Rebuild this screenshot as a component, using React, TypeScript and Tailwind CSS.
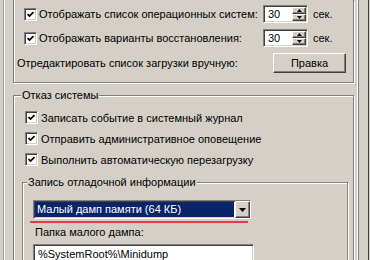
import React from 'react';

const sunken =
  'border border-t-[#808080] border-l-[#808080] border-b-white border-r-white shadow-[inset_1px_1px_0_#404040,inset_-1px_-1px_0_#d4d0c8]';
const raised =
  'border border-t-white border-l-white border-r-[#404040] border-b-[#404040] shadow-[inset_-1px_-1px_0_#808080]';
const etched = 'border border-[#808080] shadow-[inset_1px_1px_0_#fff,1px_1px_0_#fff]';

const Check: React.FC = () => (
  <div className={`w-[13px] h-[13px] bg-white shrink-0 flex items-center justify-center ${sunken}`}>
    <svg width="7" height="7" viewBox="0 0 7 7">
      <path d="M0.5 3 L2.5 5 L6.5 1" fill="none" stroke="#000" strokeWidth="1.7" />
    </svg>
  </div>
);

const CheckRow: React.FC<{ label: string }> = ({ label }) => (
  <div className="h-[21px] flex items-center pl-[11px]">
    <Check />
    <span className="ml-[2px] px-[1px] whitespace-nowrap">{label}</span>
  </div>
);

const Spin: React.FC = () => (
  <div className={`w-[45px] h-[18px] bg-white flex shrink-0 ${sunken}`}>
    <div className="flex-1 pl-[4px] leading-[16px]">30</div>
    <div className="w-[14px] my-[1px] mr-[1px] flex flex-col">
      <div className={`flex-1 flex items-center justify-center bg-[#d4d0c8] ${raised}`}>
        <svg width="5" height="3" viewBox="0 0 5 3"><path d="M2.5 0 L5 3 L0 3 Z" fill="#000" /></svg>
      </div>
      <div className={`flex-1 flex items-center justify-center bg-[#d4d0c8] ${raised}`}>
        <svg width="5" height="3" viewBox="0 0 5 3"><path d="M0 0 L5 0 L2.5 3 Z" fill="#000" /></svg>
      </div>
    </div>
  </div>
);

const SpinRow: React.FC<{ label: string }> = ({ label }) => (
  <div className="h-[24px] flex items-center pl-[10px]">
    <Check />
    <span className="ml-[2px] w-[224px] whitespace-nowrap">{label}</span>
    <Spin />
    <span className="ml-[5px]">сек.</span>
  </div>
);

export default function App() {
  return (
    <div
      className="w-[370px] h-[260px] bg-[#d4d0c8] flex overflow-hidden text-[11px] leading-[14px] text-black"
      style={{ fontFamily: '"Liberation Sans", Arial, sans-serif' }}
    >
      <div className="w-[3px] shrink-0" />

      {/* dialog panel */}
      <div className="w-[356px] shrink-0 border-l border-l-[#a0a0a0] border-r border-r-[#808080] shadow-[inset_1px_0_0_#fff,inset_-1px_0_0_#fff] pl-[9px]">
        {/* boot options group (top cut off) */}
        <div className="w-[341px] h-[83px] border-x border-b border-[#808080] shadow-[inset_1px_0_0_#fff,1px_1px_0_#fff] pt-[2px]">
          <SpinRow label="Отображать список операционных систем:" />
          <SpinRow label="Отображать варианты восстановления:" />
          <div className="h-[26px] flex items-center pl-[3px]">
            <span className="w-[256px] whitespace-nowrap">Отредактировать список загрузки вручную:</span>
            <button className={`w-[73px] h-[20px] bg-[#d4d0c8] ${raised}`}>Правка</button>
          </div>
        </div>

        {/* system failure group */}
        <fieldset className={`w-[341px] mt-[5px] pb-[40px] ${etched}`}>
          <legend className="ml-[7px] px-[1px] bg-[#d4d0c8]">Отказ системы</legend>
          <div className="pt-[5px]">
            <CheckRow label="Записать событие в системный журнал" />
            <CheckRow label="Отправить административное оповещение" />
            <CheckRow label="Выполнить автоматическую перезагрузку" />
          </div>

          <fieldset className={`ml-[8px] mr-[5px] mt-[5px] pb-[20px] ${etched}`}>
            <legend className="ml-[4px] px-[1px] bg-[#d4d0c8]">Запись отладочной информации</legend>

            <div className={`ml-[10px] mt-[11px] w-[218px] h-[19px] bg-white flex ${sunken}`}>
              <div className="flex-1 m-[1px] bg-[#0a246a] text-white pl-[2px] leading-[14px] whitespace-nowrap">
                Малый дамп памяти (64 КБ)
              </div>
              <div className={`w-[15px] bg-[#d4d0c8] flex items-center justify-center ${raised}`}>
                <svg width="7" height="4" viewBox="0 0 7 4"><path d="M0 0 L7 0 L3.5 4 Z" fill="#000" /></svg>
              </div>
            </div>
            <div className="ml-[7px] mt-[2px] w-[218px] h-[2px] bg-[#e23c4c]" />

            <div className="ml-[12px] mt-[2px]">Папка малого дампа:</div>
            <div className={`ml-[10px] mt-[5px] w-[221px] h-[20px] bg-white pl-[4px] pt-[2px] ${sunken}`}>
              %SystemRoot%\Minidump
            </div>
          </fieldset>
        </fieldset>
      </div>

      <div className="w-[9px] shrink-0" />
      <div className="w-[1px] shrink-0 bg-[#404040]" />
    </div>
  );
}
